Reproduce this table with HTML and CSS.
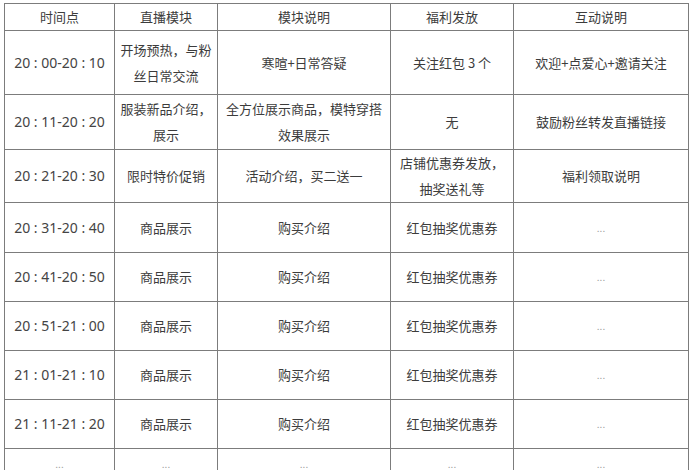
FILE: index.html
```html
<!DOCTYPE html>
<html lang="zh-CN">
<head>
<meta charset="utf-8">
<title>直播流程</title>
<link rel="stylesheet" href="styles.css">
</head>
<body>
<table class="plan">
  <colgroup>
    <col class="c-time">
    <col class="c-module">
    <col class="c-desc">
    <col class="c-gift">
    <col class="c-talk">
  </colgroup>
  <thead>
    <tr class="r-head">
      <th>时间点</th><th>直播模块</th><th>模块说明</th><th>福利发放</th><th>互动说明</th>
    </tr>
  </thead>
  <tbody>
    <tr class="r-1">
      <td class="time">20 : 00-20 : 10</td><td>开场预热，与粉<br>丝日常交流</td><td>寒暄+日常答疑</td><td>关注红包 3 个</td><td>欢迎+点爱心+邀请关注</td>
    </tr>
    <tr class="r-2">
      <td class="time">20 : 11-20 : 20</td><td>服装新品介绍，<br>展示</td><td>全方位展示商品，模特穿搭<br>效果展示</td><td>无</td><td>鼓励粉丝转发直播链接</td>
    </tr>
    <tr class="r-3">
      <td class="time">20 : 21-20 : 30</td><td>限时特价促销</td><td>活动介绍，买二送一</td><td>店铺优惠券发放，<br>抽奖送礼等</td><td>福利领取说明</td>
    </tr>
    <tr class="r-4">
      <td class="time">20 : 31-20 : 40</td><td>商品展示</td><td>购买介绍</td><td>红包抽奖优惠券</td><td class="more">...</td>
    </tr>
    <tr class="r-n">
      <td class="time">20 : 41-20 : 50</td><td>商品展示</td><td>购买介绍</td><td>红包抽奖优惠券</td><td class="more">...</td>
    </tr>
    <tr class="r-n">
      <td class="time">20 : 51-21 : 00</td><td>商品展示</td><td>购买介绍</td><td>红包抽奖优惠券</td><td class="more">...</td>
    </tr>
    <tr class="r-n">
      <td class="time">21 : 01-21 : 10</td><td>商品展示</td><td>购买介绍</td><td>红包抽奖优惠券</td><td class="more">...</td>
    </tr>
    <tr class="r-n">
      <td class="time">21 : 11-21 : 20</td><td>商品展示</td><td>购买介绍</td><td>红包抽奖优惠券</td><td class="more">...</td>
    </tr>
    <tr class="r-last">
      <td class="more">...</td><td class="more">...</td><td class="more">...</td><td class="more">...</td><td class="more">...</td>
    </tr>
  </tbody>
</table>
</body>
</html>
```
FILE: styles.css
```css
html, body {
  margin: 0;
  padding: 0;
  background: #ffffff;
}
body {
  font-family: "Noto Sans CJK SC", "Noto Sans", sans-serif;
  font-size: 13px;
  color: #3c3c3c;
  overflow: hidden;
}
.plan {
  border-collapse: collapse;
  table-layout: fixed;
  width: 684px;
  margin: 3px 0 0 4px;
}
.c-time { width: 110px; }
.c-module { width: 103px; }
.c-desc { width: 173px; }
.c-gift { width: 123px; }
.c-talk { width: 175px; }
.plan th,
.plan td {
  border: 1px solid #7c7c7c;
  text-align: center;
  vertical-align: middle;
  padding: 0 4px;
  font-weight: normal;
  line-height: 26px;
  white-space: nowrap;
}
.plan td.time {
  font-family: "Noto Sans", "Noto Sans CJK SC", sans-serif;
  font-size: 14px;
  color: #444444;
}
.r-head { height: 27px; }
.r-head th { line-height: 20px; }
.r-1 { height: 64px; }
.r-2 { height: 55px; }
.r-3 { height: 53px; }
.r-4 { height: 50px; }
.r-n { height: 49px; }
.r-last { height: 30px; }
.plan td.more {
  color: #a0a0a0;
  font-size: 10px;
  line-height: 14px;
}
```
